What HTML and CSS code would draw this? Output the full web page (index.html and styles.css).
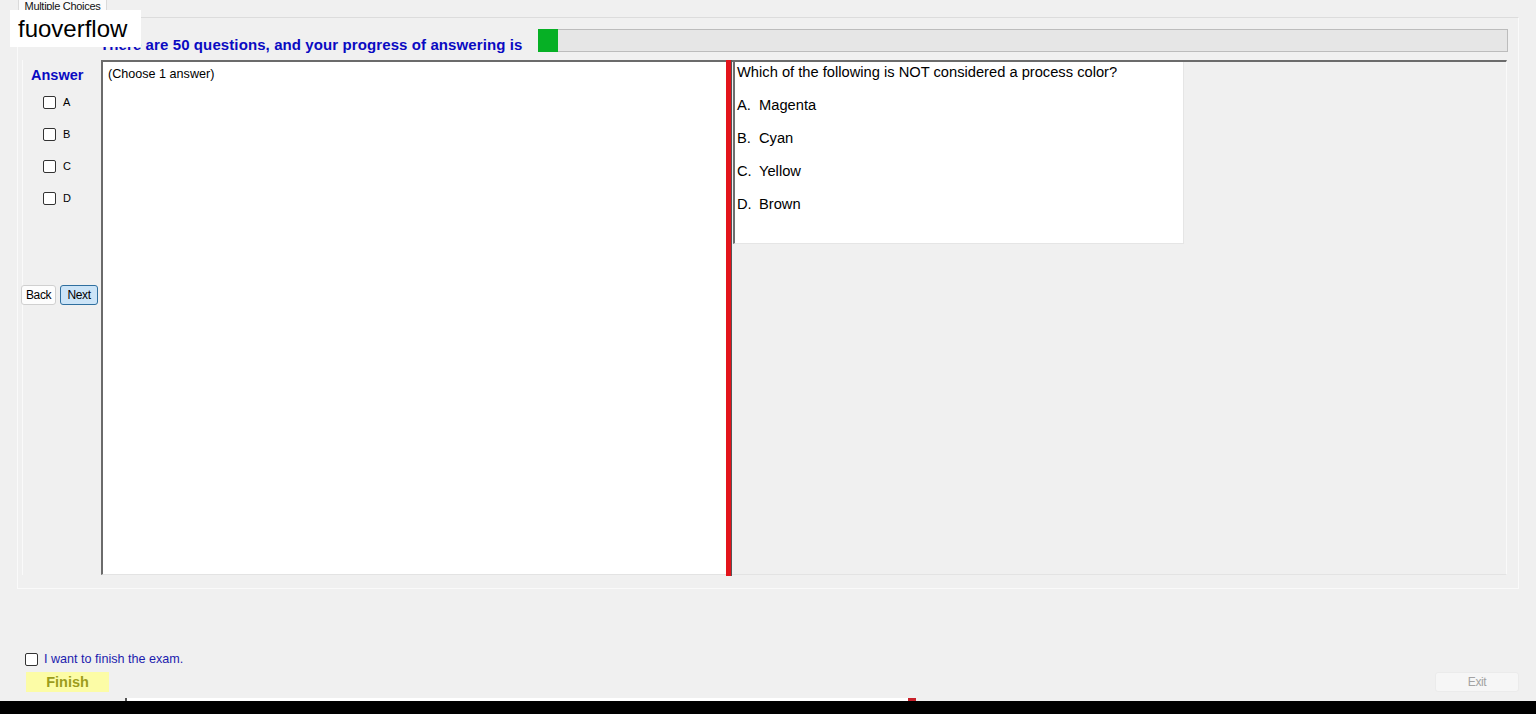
FILE: index.html
```html
<!DOCTYPE html>
<html>
	<head>
		<meta charset="utf-8">
		<title>Multiple Choices</title>
		<link rel="stylesheet" href="styles.css">
	</head>
	<body>
		<div class="window">
			<div class="brand">fuoverflow</div>

			<div class="tabs">
				<div class="tab">Multiple Choices</div>
			</div>

			<div class="tabpage">
				<div class="top-row">
					<div class="heading">There are 50 questions, and your progress of answering is</div>
					<div class="progress"><div class="progress-fill" style="width: 2%"></div></div>
				</div>

				<div class="main">
					<div class="sidebar">
						<div class="answer-title">Answer</div>
						<label class="opt"><input type="checkbox"><span>A</span></label>
						<label class="opt"><input type="checkbox"><span>B</span></label>
						<label class="opt"><input type="checkbox"><span>C</span></label>
						<label class="opt"><input type="checkbox"><span>D</span></label>
						<div class="nav">
							<button class="btn">Back</button>
							<button class="btn btn-next">Next</button>
						</div>
					</div>

					<div class="answer-box">(Choose 1 answer)</div>
					<div class="splitter"></div>

					<div class="question-panel">
						<div class="question">
							<p>Which of the following is NOT considered a process color?</p>
							<p><span class="letter">A.</span>Magenta</p>
							<p><span class="letter">B.</span>Cyan</p>
							<p><span class="letter">C.</span>Yellow</p>
							<p><span class="letter">D.</span>Brown</p>
						</div>
					</div>
				</div>
			</div>

			<div class="footer">
				<label class="finish-check"><input type="checkbox"><span>I want to finish the exam.</span></label>
				<div class="footer-row">
					<button class="finish">Finish</button>
					<button class="exit">Exit</button>
				</div>
			</div>

			<div class="strip"><span class="strip-mark"></span></div>
			<div class="taskbar"></div>
		</div>
	</body>
</html>
```

FILE: styles.css
```css
*{
	box-sizing: border-box;
}
body{
	margin: 0;
	background-color: #f0f0f0;
	font-family: "Liberation Sans", Arial, sans-serif;
	color: #000;
}
.window{
	position: relative;
	height: 714px;
	overflow: hidden;
	display: flex;
	flex-direction: column;
}

/* watermark on top */
.brand{
	position: absolute;
	left: 10px;
	top: 10px;
	width: 131px;
	height: 37px;
	padding-left: 8px;
	background: #fff;
	font-size: 24px;
	line-height: 37px;
	z-index: 5;
}

/* tab header */
.tabs{
	height: 17px;
	padding-left: 18px;
}
.tab{
	width: 89px;
	height: 17px;
	margin-top: -4px;
	padding-top: 3px;
	background: #fbfbfb;
	border: 1px solid #dadada;
	border-bottom: none;
	font-size: 11px;
	text-align: center;
	color: #111;
	letter-spacing: -0.3px;
}

.tabpage{
	width: 1502px;
	height: 572px;
	margin-left: 17px;
	border: 1px solid #fafafa;
	border-top-color: #dcdcdc;
	padding: 11px 11px 0 4px;
}

.top-row{
	display: flex;
	align-items: center;
	height: 23px;
}
.heading{
	padding-left: 78px;
	padding-top: 8px;
	font-size: 15px;
	font-weight: bold;
	letter-spacing: 0.1px;
	color: #0a0ac2;
	white-space: nowrap;
}
.progress{
	flex: 1;
	height: 23px;
	margin-left: 16px;
	margin-right: -1px;
	background: #e6e6e6;
	border: 1px solid #bcbcbc;
}
.progress-fill{
	margin: -1px 0 0 -1px;
	height: 23px;
	background: #06b025;
}

/* main split area */
.main{
	display: flex;
	height: 515px;
	margin-top: 8px;
}
.sidebar{
	width: 79px;
	border-left: 1px solid #fafafa;
	display: flex;
	flex-direction: column;
}
.answer-title{
	margin: 7px 0 0 8px;
	font-size: 14.5px;
	font-weight: bold;
	color: #0a0ac2;
}
.opt{
	display: flex;
	align-items: center;
	height: 32px;
	padding-left: 20px;
	font-size: 11px;
}
.opt:first-of-type{
	margin-top: 3px;
}
.opt input,
.finish-check input{
	width: 13px;
	height: 13px;
	margin: 0 7px 0 0;
	appearance: none;
	border: 1px solid #333;
	border-radius: 2px;
	background: #fff;
}
.nav{
	display: flex;
	gap: 4px;
	margin-top: 71px;
	margin-left: -2px;
}
.btn{
	height: 20px;
	padding: 0 4px;
	font-family: inherit;
	font-size: 12px;
	letter-spacing: -0.4px;
	background: #fdfdfd;
	border: 1px solid #d0d0d0;
	border-radius: 3px;
	color: #000;
}
.btn-next{
	width: 38px;
	background: #cce4f7;
	border-color: #2f6f9f;
}

.answer-box{
	width: 625px;
	background: #fff;
	border-top: 2px solid #6b6b6b;
	border-left: 2px solid #6b6b6b;
	border-bottom: 1px solid #e3e3e3;
	padding: 5px 5px;
	font-size: 12.6px;
}
.splitter{
	width: 6px;
	height: 516px;
	background: #e3141b;
	border-right: 1px solid #555;
}
.question-panel{
	flex: 1;
	border-top: 2px solid #6b6b6b;
	border-right: 1px solid #fafafa;
	border-bottom: 1px solid #e3e3e3;
}
.question{
	width: 451px;
	height: 182px;
	margin-left: 1px;
	background: #fff;
	border-left: 2px solid #6e6e6e;
	border-right: 1px solid #e5e5e5;
	border-bottom: 1px solid #e5e5e5;
	padding: 2px 0 0 2px;
	font-size: 14.7px;
}
.question p{
	margin: 0 0 16px 0;
	line-height: 17px;
}
.letter{
	display: inline-block;
	width: 22px;
}

/* bottom area */
.footer{
	margin-top: 62px;
	padding-left: 25px;
}
.finish-check{
	display: flex;
	align-items: center;
	height: 16px;
	font-size: 12.6px;
	color: #1c1cae;
}
.finish-check input{
	margin-right: 6px;
}
.footer-row{
	display: flex;
	justify-content: space-between;
	margin-top: 5px;
	padding-right: 17px;
}
.finish{
	width: 83px;
	height: 20px;
	margin-left: 1px;
	background: #fcfca6;
	border: none;
	font-family: inherit;
	font-size: 14.5px;
	font-weight: bold;
	color: #9c9c1c;
}
.exit{
	width: 84px;
	height: 20px;
	background: #f6f6f6;
	border: 1px solid #ebebeb;
	border-radius: 3px;
	font-family: inherit;
	font-size: 12px;
	color: #a3a3a3;
	letter-spacing: -0.4px;
}
.strip{
	height: 3px;
	margin-top: 6px;
	margin-left: 125px;
	width: 791px;
	background: #fff;
	border-left: 2px solid #555;
	display: flex;
	justify-content: flex-end;
}
.strip-mark{
	width: 8px;
	background: #c8202a;
}
.taskbar{
	flex: 1;
	background: #000;
}
```
